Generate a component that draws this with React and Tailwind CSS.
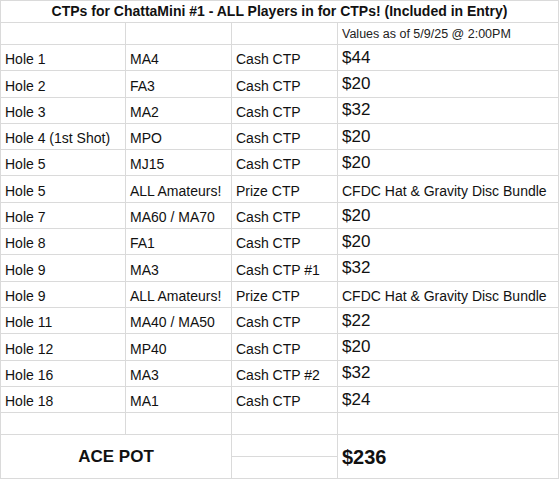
import React from "react";

const rows = [
  ["Hole 1", "MA4", "Cash CTP", "$44"],
  ["Hole 2", "FA3", "Cash CTP", "$20"],
  ["Hole 3", "MA2", "Cash CTP", "$32"],
  ["Hole 4 (1st Shot)", "MPO", "Cash CTP", "$20"],
  ["Hole 5", "MJ15", "Cash CTP", "$20"],
  ["Hole 5", "ALL Amateurs!", "Prize CTP", "CFDC Hat & Gravity Disc Bundle"],
  ["Hole 7", "MA60 / MA70", "Cash CTP", "$20"],
  ["Hole 8", "FA1", "Cash CTP", "$20"],
  ["Hole 9", "MA3", "Cash CTP #1", "$32"],
  ["Hole 9", "ALL Amateurs!", "Prize CTP", "CFDC Hat & Gravity Disc Bundle"],
  ["Hole 11", "MA40 / MA50", "Cash CTP", "$22"],
  ["Hole 12", "MP40", "Cash CTP", "$20"],
  ["Hole 16", "MA3", "Cash CTP #2", "$32"],
  ["Hole 18", "MA1", "Cash CTP", "$24"],
];

const cell = "border-r border-b border-[#dadada] flex items-end pl-[4px] pb-0 overflow-hidden whitespace-nowrap";

export default function App() {
  return (
    <div className="w-[560px] h-[479px] bg-white text-[#111] overflow-hidden" style={{ fontFamily: '"Liberation Sans", Arial, sans-serif' }}>
      <div
        className="grid w-[559px] border-l border-t border-[#dadada]"
        style={{ gridTemplateColumns: "125px 106px 106px 221px", gridTemplateRows: "22px 22px repeat(14, 26.3px) 22px 22px 22px" }}
      >
        <div className="col-span-4 border-r border-b border-[#dadada] flex items-center justify-center font-bold text-[14px]">
          CTPs for ChattaMini #1 - ALL Players in for CTPs! (Included in Entry)
        </div>
        <div className={cell}></div>
        <div className={cell}></div>
        <div className={cell}></div>
        <div className={cell + " text-[12.5px] text-[#222]"}>Values as of 5/9/25 @ 2:00PM</div>
        {rows.map((r, i) => (
          <React.Fragment key={i}>
            <div className={cell + " text-[14px]"}>{r[0]}</div>
            <div className={cell + " text-[14px]"}>{r[1]}</div>
            <div className={cell + " text-[14px]"}>{r[2]}</div>
            <div className={cell + (r[3].startsWith("$") ? " text-[17px]" : " text-[14px]")}>{r[3]}</div>
          </React.Fragment>
        ))}
        <div className={cell}></div>
        <div className={cell}></div>
        <div className={cell}></div>
        <div className={cell}></div>
        <div className="col-span-2 row-span-2 border-r border-b border-[#dadada] flex items-center justify-center font-bold text-[17px]">
          ACE POT
        </div>
        <div className={cell}></div>
        <div className="row-span-2 border-r border-b border-[#dadada] flex items-center pl-[4px] font-bold text-[20px]">
          $236
        </div>
        <div className={cell}></div>
      </div>
    </div>
  );
}
